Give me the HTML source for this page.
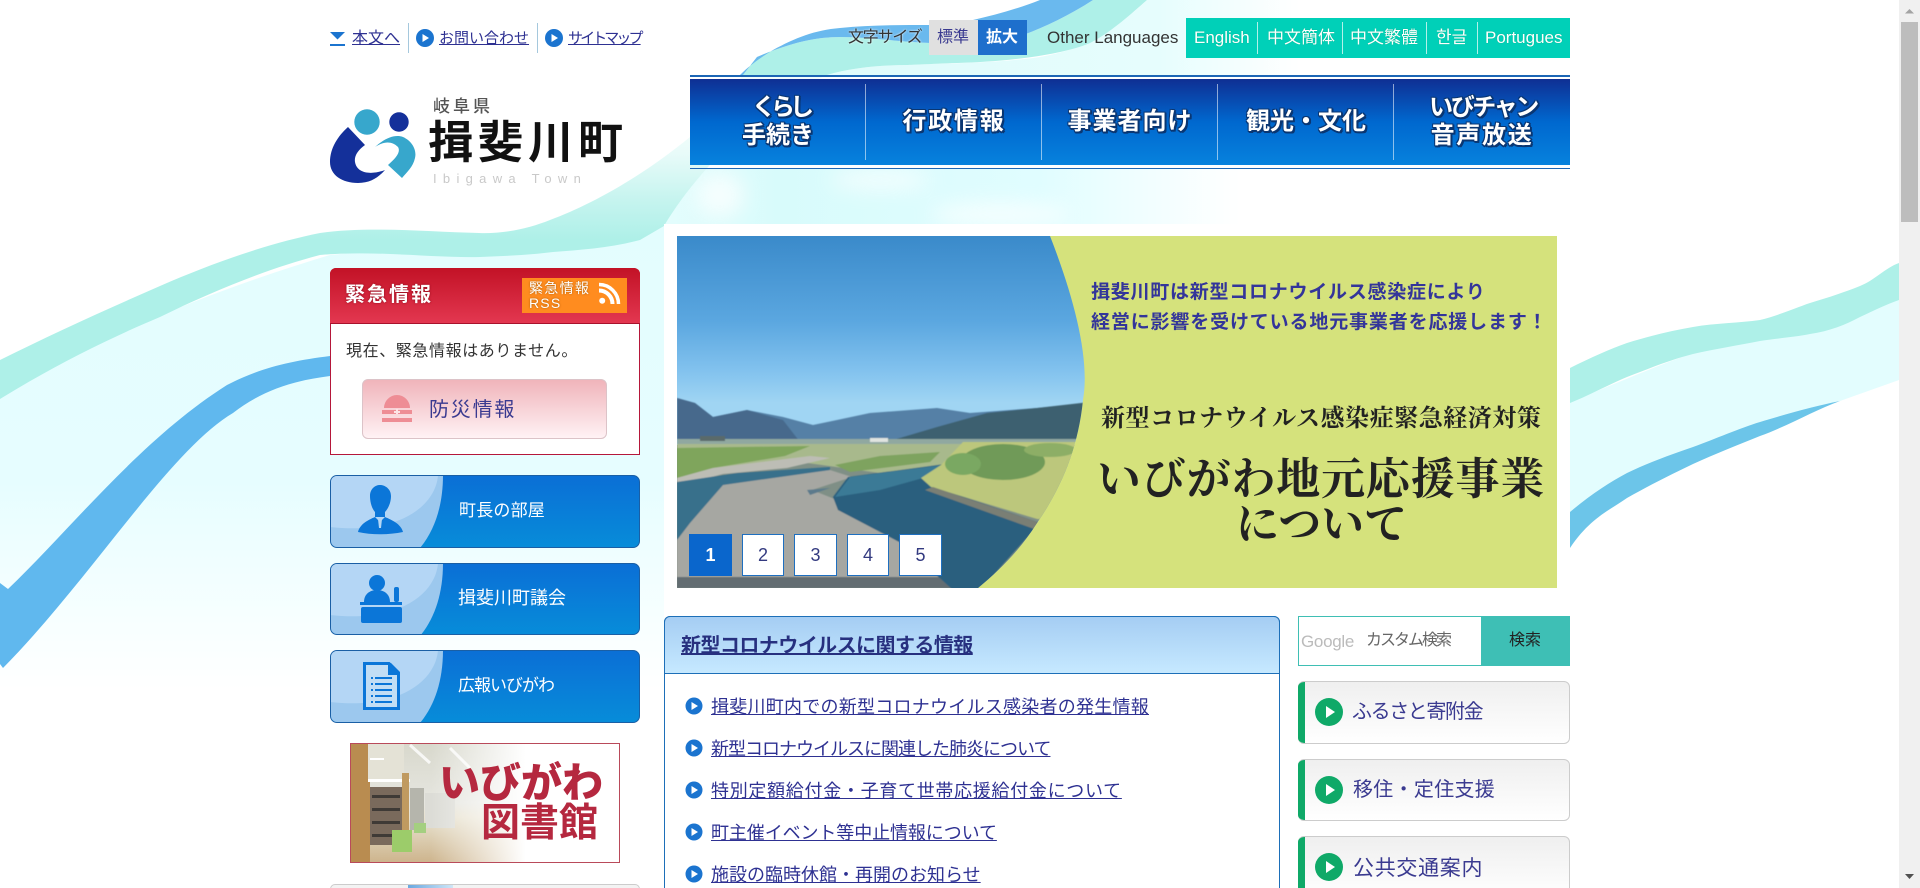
<!DOCTYPE html>
<html lang="ja"><head><meta charset="utf-8"><title>揖斐川町</title>
<style>
*{box-sizing:border-box}
html,body{margin:0;padding:0;width:1920px;height:888px;overflow:hidden;background:#fff}
body{position:relative;font-family:"Liberation Sans","Noto Sans CJK JP",sans-serif;color:#333}
.t{position:absolute;white-space:nowrap;line-height:1}
.b{position:absolute}
a{color:#2e3192;text-decoration:underline}
svg{position:absolute;overflow:visible}
.nav{position:absolute;top:79px;height:86px;width:176px;text-align:center;color:#fff;font-weight:700;font-size:24px;line-height:28px;text-shadow:1px 1px 0 #0a3672,-1px 1px 0 #0a3672,1px -1px 0 #0a3672,-1px -1px 0 #0a3672,2px 2px 0 #0a3672,0 2px 0 #0a3672,2px 0 0 #0a3672;display:flex;flex-direction:column;align-items:center;justify-content:center}
.nav span{display:block;white-space:nowrap}
.sep{position:absolute;top:84px;height:76px;width:1px;background:rgba(255,255,255,.55)}
.ls{position:absolute;top:22px;height:32px;width:1px;background:rgba(255,255,255,.7)}
.bb{position:absolute;left:330px;width:310px;background:linear-gradient(#0b6fd6,#078cd9);border:1px solid #1a5fa5;border-radius:7px;overflow:hidden}
.gb{position:absolute;left:1298px;width:272px;background:linear-gradient(#efefef,#fff);border:1px solid #ccc;border-left:0;border-radius:6px;overflow:hidden}
.gb i{position:absolute;left:0;top:0;bottom:0;width:7px;background:#0fa968}
.pg{position:absolute;top:534px;height:42px;background:#fff;border:1px solid #1e6fc0;color:#333a80;font-size:18px;line-height:40px;text-align:center;font-family:"Liberation Sans",sans-serif}
.li{position:absolute;left:711px;font-size:18px;line-height:1;white-space:nowrap}
</style></head><body>

<svg class="bg" style="left:0;top:0" width="1900" height="888" viewBox="0 0 1900 888">
<defs>
<linearGradient id="pl" x1="0" y1="0" x2="0" y2="1"><stop offset="0" stop-color="#e3fdfe"/><stop offset=".55" stop-color="#e6fdff"/><stop offset=".85" stop-color="#f7ffff"/><stop offset="1" stop-color="#fff"/></linearGradient>
<linearGradient id="tl" gradientUnits="userSpaceOnUse" x1="0" y1="240" x2="0" y2="125"><stop offset="0" stop-color="#aef0e8"/><stop offset=".35" stop-color="#c6f4ef"/><stop offset=".75" stop-color="#e8fbf9"/><stop offset="1" stop-color="#f3fdfc"/></linearGradient>
<linearGradient id="pc" x1="0" y1="0" x2="1" y2="0"><stop offset="0" stop-color="#dffcfb"/><stop offset=".7" stop-color="#e6fdfd"/><stop offset="1" stop-color="#fff"/></linearGradient>
<linearGradient id="cl" x1="0" y1="0" x2="1" y2="0"><stop offset="0" stop-color="#e4fdfd"/><stop offset=".2" stop-color="#d8fbfb"/><stop offset=".65" stop-color="#e0fdff"/><stop offset=".8" stop-color="#eefeff"/><stop offset="1" stop-color="#fff"/></linearGradient>
<filter id="bl" x="-20%" y="-50%" width="140%" height="200%"><feGaussianBlur stdDeviation="10"/></filter>
</defs>
<path d="M0 395C110 330 230 285 330 255L664 224V690H0Z" fill="url(#pl)"/>
<rect x="664" y="168" width="576" height="58" fill="url(#cl)"/>
<g filter="url(#bl)" opacity=".7"><ellipse cx="1000" cy="215" rx="70" ry="12" fill="#fff"/><ellipse cx="720" cy="195" rx="24" ry="22" fill="#fff"/><ellipse cx="880" cy="180" rx="50" ry="9" fill="#fff"/></g>
<path d="M0 360C50 335 105 310 160 286C215 262 270 243 320 233C370 226 430 232 479 233C505 234 530 228 550 220C590 205 640 178 690 137C712 118 730 92 743 75H827C770 100 700 165 664 226L640 240C610 248 580 250 553 252C530 255 505 256 480 257C430 258 375 250 320 255C270 268 215 290 160 317C110 338 55 365 0 399Z" fill="url(#tl)"/>
<path d="M0 583L8 589C70 530 140 440 227 385C260 368 290 361 330 356V376C290 381 260 392 233 413C170 450 90 580 3 668L0 664Z" fill="#60b8ee"/>
<path d="M1147 0H1300V75H827C850 68 880 65 907 65C957 63 1000 63 1040 57C1080 50 1110 35 1147 0Z" fill="url(#pc)"/>
<path d="M743 75L757 57C790 43 815 37 840 37C870 37 900 42 930 43C965 45 1000 42 1023 35C1045 27 1070 15 1093 0H1147C1130 15 1110 33 1090 43C1060 56 1000 62 957 63C930 64 907 65 907 65C880 65 850 68 827 75Z" fill="#aef0e8"/>
<path d="M740 75C750 65 760 58 773 50C795 38 815 30 840 28C870 25 900 25 930 25C950 25 960 23 973 20C995 15 1020 8 1040 0H1093C1070 15 1045 27 1023 35C1000 42 965 45 930 43C900 42 870 37 840 37C815 37 790 43 757 57L743 75Z" fill="#6ab9ee"/>
<path d="M1540 530L1570 512C1590 495 1610 482 1627 473C1650 462 1670 455 1693 447C1715 439 1740 428 1760 422C1790 413 1815 406 1840 401L1899 380V300C1875 305 1850 312 1827 328C1795 335 1760 338 1727 345C1680 352 1620 385 1540 412Z" fill="#e3fdfe"/>
<path d="M1540 378L1570 368C1590 358 1610 349 1627 343C1650 336 1670 331 1693 327C1715 323 1740 323 1760 320C1780 315 1795 308 1810 303C1830 297 1845 292 1860 286C1875 280 1885 268 1899 263V300C1885 305 1875 310 1860 317C1845 325 1830 331 1810 334C1795 337 1780 338 1760 341C1740 345 1715 349 1693 354C1670 360 1650 368 1627 377C1610 384 1590 395 1570 403L1540 414Z" fill="#aef0e8"/>
<path d="M1540 530L1570 512C1590 495 1610 482 1627 473C1650 462 1670 455 1693 447C1715 439 1740 428 1760 422C1790 413 1815 406 1840 401C1815 410 1790 425 1760 436C1740 444 1715 454 1693 464C1670 475 1650 485 1627 498C1610 510 1590 518 1570 548L1540 570Z" fill="#6cc5e9"/>
</svg>

<!-- top links -->
<svg style="left:330px;top:30px" width="16" height="16"><path d="M0 2H15L7.5 9.5Z" fill="#1b74cf"/><rect x="0" y="14" width="15" height="2" fill="#1b74cf"/></svg>
<a class="t" style="left:352px;top:31px;font-size:16px">本文へ</a>
<div class="b" style="left:408px;top:23px;width:1px;height:30px;background:#a5c8dd"></div>
<svg style="left:416px;top:29px" width="18" height="18"><circle cx="9" cy="9" r="9" fill="#1b74cf"/><path d="M6.5 5L13 9L6.5 13Z" fill="#fff"/></svg>
<a class="t" style="left:439px;top:31px;font-size:15px">お問い合わせ</a>
<div class="b" style="left:537px;top:23px;width:1px;height:30px;background:#a5c8dd"></div>
<svg style="left:545px;top:29px" width="18" height="18"><circle cx="9" cy="9" r="9" fill="#1b74cf"/><path d="M6.5 5L13 9L6.5 13Z" fill="#fff"/></svg>
<a class="t" style="left:568px;top:31px;font-size:15px;letter-spacing:-2.9px">サイトマップ</a>

<!-- font size / languages -->
<div class="t" style="left:848px;top:30px;font-size:16px;letter-spacing:-1.2px;color:#333;text-shadow:0 0 2px #fff">文字サイズ</div>
<div class="b" style="left:929px;top:20px;width:49px;height:35px;background:#e0e0e0"></div>
<div class="t" style="left:937px;top:30px;font-size:16px;color:#3a3a90">標準</div>
<div class="b" style="left:978px;top:20px;width:49px;height:35px;background:#1e6fcc"></div>
<div class="t" style="left:986px;top:30px;font-size:16px;font-weight:700;color:#fff">拡大</div>
<div class="t" style="left:1047px;top:29px;font-size:17px;color:#333">Other Languages</div>
<div class="b" style="left:1186px;top:18px;width:384px;height:40px;background:#00d0b8"></div>
<div class="ls" style="left:1257px"></div><div class="ls" style="left:1342px"></div><div class="ls" style="left:1426px"></div><div class="ls" style="left:1477px"></div>
<div class="t" style="left:1194px;top:29px;font-size:17px;color:#fff;text-shadow:0 0 1px #0a7">English</div>
<div class="t" style="left:1267px;top:29px;font-size:17px;color:#fff;text-shadow:0 0 1px #0a7">中文簡体</div>
<div class="t" style="left:1350px;top:29px;font-size:17px;color:#fff;text-shadow:0 0 1px #0a7">中文繁體</div>
<div class="t" style="left:1436px;top:29px;font-size:17px;color:#fff;text-shadow:0 0 1px #0a7">한글</div>
<div class="t" style="left:1485px;top:29px;font-size:17px;color:#fff;text-shadow:0 0 1px #0a7">Portugues</div>

<!-- logo -->
<svg style="left:0;top:0" width="640" height="200">
<circle cx="367" cy="122" r="12.7" fill="#37a7cc"/><circle cx="399" cy="122" r="9.7" fill="#14309a"/>
<path d="M348 127L365 145C358 150 354 156 355 162C357 174 372 175 385 170C378 178 370 183 358 183C342 183 330 175 330 162C330 148 338 136 348 127Z" fill="#14309a"/>
<path d="M375 147C385 138 395 134 403 137C412 141 417 150 415 158C413 167 407 172 402 178L388 165C396 158 401 152 398 147C392 141 384 141 375 147Z" fill="#37a7cc"/>
</svg>
<div class="t" style="left:433px;top:98px;font-size:17px;letter-spacing:3px;color:#555;font-weight:500">岐阜県</div>
<div class="t" style="left:428px;top:120px;font-size:45px;letter-spacing:5px;color:#111;font-weight:700">揖斐川町</div>
<div class="t" style="left:433px;top:172px;font-size:13px;letter-spacing:6.3px;color:#c9c9c9">Ibigawa Town</div>

<!-- nav -->
<div class="b" style="left:690px;top:75px;width:880px;height:2px;background:#1c66b5"></div>
<div class="b" style="left:690px;top:79px;width:880px;height:86px;background:linear-gradient(#0f2f93,#0068cf 50%,#0782dd)"></div>
<div class="b" style="left:690px;top:168px;width:880px;height:1px;background:#1c66b5"></div>
<div class="sep" style="left:865px"></div><div class="sep" style="left:1041px"></div><div class="sep" style="left:1217px"></div><div class="sep" style="left:1393px"></div>
<div class="nav" style="left:690px"><span style="letter-spacing:-5px;margin-right:-5px">くらし</span><span>手続き</span></div>
<div class="nav" style="left:866px;letter-spacing:1.8px">行政情報</div>
<div class="nav" style="left:1042px;letter-spacing:1px">事業者向け</div>
<div class="nav" style="left:1218px">観光・文化</div>
<div class="nav" style="left:1394px"><span style="letter-spacing:-2.4px;margin-right:-2px">いびチャン</span><span style="letter-spacing:1.7px">音声放送</span></div>

<!-- emergency -->
<div class="b" style="left:330px;top:268px;width:310px;height:187px;background:#fff;border:1px solid #b5173a;border-radius:6px 6px 0 0"></div>
<div class="b" style="left:330px;top:268px;width:310px;height:56px;background:linear-gradient(#c21226,#e33750);border-radius:6px 6px 0 0;border-bottom:1px solid #a8122c"></div>
<div class="t" style="left:345px;top:285px;font-size:20px;letter-spacing:2px;font-weight:700;color:#fff;text-shadow:0 0 2px #8a0c1c">緊急情報</div>
<div class="b" style="left:522px;top:278px;width:105px;height:35px;background:#ff8c1f"></div>
<div class="t" style="left:529px;top:281px;font-size:14px;letter-spacing:1.3px;color:#fff;text-shadow:0 0 2px #a65a00">緊急情報</div>
<div class="t" style="left:529px;top:296px;font-size:14px;letter-spacing:1.2px;color:#fff;text-shadow:0 0 2px #a65a00">RSS</div>
<svg style="left:599px;top:283px" width="21" height="21"><circle cx="3.2" cy="17.8" r="3" fill="#fff"/><path d="M0 7.5A13.5 13.5 0 0 1 13.5 21" fill="none" stroke="#fff" stroke-width="4"/><path d="M0 1.5A19.5 19.5 0 0 1 19.5 21" fill="none" stroke="#fff" stroke-width="3.5"/></svg>
<div class="t" style="left:346px;top:344px;font-size:16px;letter-spacing:.6px;color:#333">現在、緊急情報はありません。</div>
<div class="b" style="left:362px;top:379px;width:245px;height:60px;background:linear-gradient(#f0b4ba,#fff2f4);border:1px solid #dcc3c8;border-radius:6px"></div>
<svg style="left:382px;top:395px" width="30" height="28"><path d="M2 13C2 6 8 0 15 0S28 6 28 13Z" fill="#ee8d95"/><rect x="0" y="15" width="30" height="4" fill="#ee8d95"/><rect x="0" y="23" width="30" height="4" fill="#ee8d95"/><path d="M14 14h2v2h2v2h-2v1h-2v-1h-2v-2h2z" fill="#fde4e6"/></svg>
<div class="t" style="left:429px;top:400px;font-size:20px;letter-spacing:1.8px;color:#3a3a90">防災情報</div>

<!-- blue buttons -->
<svg width="0" height="0" style="left:0;top:0"><defs><symbol id="bs" viewBox="0 0 310 73"><path d="M0 0H113C113 30 105 55 90 73H0Z" fill="#9cc8ee"/><path d="M0 0H108C106 30 70 60 0 52Z" fill="#b4d6f5"/></symbol></defs></svg>
<div class="bb" style="top:475px;height:73px"><svg style="left:-1px;top:-1px" width="310" height="73"><use href="#bs"/></svg></div>
<svg style="left:358px;top:484px" width="46" height="50"><path d="M12 12C12 5 17 1 22 1S33 5 33 12C33 20 29 26 27 28V33H17V28C15 26 12 20 12 12Z" fill="#0b76d8"/><path d="M0 48C2 40 10 36 17 33L22 38L27 33C34 36 43 40 45 48C30 51 14 51 0 48Z" fill="#0b76d8"/><path d="M20 35h4l-1 9h-2z" fill="#b4d6f5"/></svg>
<div class="t" style="left:459px;top:502px;font-size:17px;letter-spacing:.2px;color:#fff">町長の部屋</div>

<div class="bb" style="top:563px;height:72px"><svg style="left:-1px;top:-1px" width="310" height="73"><use href="#bs"/></svg></div>
<svg style="left:360px;top:575px" width="43" height="49"><circle cx="17" cy="8" r="8" fill="#0b76d8"/><path d="M4 27C4 19 10 15 17 15S30 19 30 27Z" fill="#0b76d8"/><rect x="34" y="12" width="5" height="15" rx="2" fill="#0b76d8"/><rect x="0" y="27" width="42" height="3" fill="#0b76d8"/><rect x="1" y="32" width="41" height="16" rx="2" fill="#0b76d8"/></svg>
<div class="t" style="left:458px;top:589px;font-size:18px;color:#fff">揖斐川町議会</div>

<div class="bb" style="top:650px;height:73px"><svg style="left:-1px;top:-1px" width="310" height="73"><use href="#bs"/></svg></div>
<svg style="left:363px;top:662px" width="37" height="49"><path d="M1.5 1.5H26L35.5 11V46.5H1.5Z" fill="#c2def5" stroke="#0b76d8" stroke-width="3"/><path d="M25 1H28L37 10V13H25Z" fill="#0b76d8"/><g fill="#0b76d8"><rect x="12" y="15" width="17" height="2"/><rect x="12" y="21" width="17" height="2"/><rect x="12" y="27" width="17" height="2"/><rect x="12" y="33" width="17" height="2"/><rect x="12" y="39" width="17" height="2"/><rect x="8" y="15" width="2" height="2"/><rect x="8" y="21" width="2" height="2"/><rect x="8" y="27" width="2" height="2"/><rect x="8" y="33" width="2" height="2"/><rect x="8" y="39" width="2" height="2"/></g></svg>
<div class="t" style="left:458px;top:677px;font-size:17px;letter-spacing:-1px;color:#fff">広報いびがわ</div>

<!-- library banner -->
<svg style="left:350px;top:743px" width="270" height="120" viewBox="0 0 270 120">
<defs><linearGradient id="fd" x1="0" y1="0" x2="1" y2="0"><stop offset=".3" stop-color="#fff" stop-opacity="0"/><stop offset=".65" stop-color="#fff"/></linearGradient>
<linearGradient id="fl" x1="0" y1="0" x2="0" y2="1"><stop offset="0" stop-color="#d8d8cc"/><stop offset=".5" stop-color="#e6e6e0"/><stop offset=".62" stop-color="#e8e2d0"/><stop offset="1" stop-color="#cdb48c"/></linearGradient></defs>
<rect width="270" height="120" fill="url(#fl)"/>
<rect x="0" width="20" height="120" fill="#b98c50"/><rect x="18" y="0" width="36" height="36" fill="#e4e2d6"/><rect x="20" y="15" width="14" height="2" fill="#fff"/><rect x="18" y="36" width="42" height="3" fill="#fff"/>
<rect x="20" y="44" width="32" height="58" fill="#7a6a5c"/>
<rect x="22" y="52" width="28" height="3" fill="#3f3a36"/><rect x="22" y="65" width="28" height="3" fill="#3f3a36"/><rect x="22" y="78" width="28" height="3" fill="#3f3a36"/><rect x="22" y="91" width="28" height="3" fill="#3f3a36"/>
<rect x="52" y="30" width="7" height="70" fill="#c09a60"/><rect x="60" y="45" width="14" height="42" fill="#b5b5ac"/><rect x="75" y="50" width="30" height="35" fill="#dcdcd6"/>
<path d="M42 87h20v22H42z" fill="#9ccc6a"/><path d="M64 80h12v10H64z" fill="#a4cf80"/>
<path d="M60 2L80 20M100 5L120 25" stroke="#fff" stroke-width="3" opacity=".8"/>
<rect width="270" height="120" fill="url(#fd)"/>
<rect x=".5" y=".5" width="269" height="119" fill="none" stroke="#b94a5a"/>
</svg>
<div class="t" style="left:439px;top:763px;font-size:41px;font-weight:900;color:#b5283f">いびがわ</div>
<div class="t" style="left:481px;top:804px;font-size:39px;font-weight:700;color:#b5283f">図書館</div>

<div class="b" style="left:330px;top:884px;width:310px;height:10px;background:#f3f3f3;border:1px solid #ccc;border-radius:6px"></div>
<div class="b" style="left:408px;top:885px;width:45px;height:4px;background:linear-gradient(90deg,#6aa8e0,#cfe6f7)"></div>

<!-- hero -->
<div class="b" style="left:664px;top:224px;width:906px;height:664px;background:#fff"></div>
<svg style="left:677px;top:236px" width="880" height="352" viewBox="677 236 880 352">
<defs>
<linearGradient id="sky" gradientUnits="userSpaceOnUse" x1="0" y1="236" x2="0" y2="450"><stop offset="0" stop-color="#3a8aca"/><stop offset=".4" stop-color="#5ba7e0"/><stop offset=".63" stop-color="#82c2ee"/><stop offset=".78" stop-color="#a0d5f3"/></linearGradient>
<filter id="sft"><feGaussianBlur stdDeviation=".5"/></filter>
<clipPath id="ph"><path d="M677 236H1050C1075 300 1090 360 1083 400C1078 450 1060 490 1037 523C1020 550 1000 570 978 588H677Z"/></clipPath>
</defs>
<rect x="677" y="236" width="880" height="352" fill="#d5e27c"/>
<g clip-path="url(#ph)">
<rect x="677" y="236" width="420" height="352" fill="url(#sky)"/>
<rect x="677" y="445" width="420" height="143" fill="#7f8f86"/>
<g filter="url(#sft)">
<path d="M677 398L695 403L713 417L747 410L783 417L813 425L837 420L870 413L937 408L970 413L1037 408L1090 403V445H677Z" fill="#5480a6"/>
<path d="M677 398L695 403L713 417L747 410L783 420L800 442H677Z" fill="#47698c"/>
<path d="M893 440L937 427L987 413L1037 408L1090 402V442Z" fill="#3d6070"/>
<rect x="677" y="439" width="410" height="5" fill="#90a8a0"/>
<rect x="700" y="436" width="25" height="5" fill="#5a6a6a"/><rect x="870" y="438" width="18" height="4" fill="#e0e4e0"/>
<path d="M677 444H1090V470L1037 517L930 480L800 462L677 480Z" fill="#a8b98c"/>
<path d="M677 448L810 446L785 456L713 468L677 478Z" fill="#7fa55c"/>
<path d="M677 478L713 468L810 456L830 458L787 468L723 474L677 486Z" fill="#bdbdb5"/>
<path d="M677 482L737 473L830 467L830 472L723 487L690 525L677 542Z" fill="#37708b"/>
<path d="M677 540L690 523L723 485L830 470L852 477L812 490L837 500L840 510L883 530L903 543L953 580V588H677Z" fill="#a6a7a2"/>
<path d="M677 577H953V588H677Z" fill="#646d72"/>
<path d="M807 490L830 488L810 495Z" fill="#5b7a8c"/>
<path d="M848 477L945 464L925 478L935 487L1040 523L980 590H953L901 543L838 510L833 497Z" fill="#2a5f7e"/>
<path d="M850 477L943 465L923 478L880 490L835 497Z" fill="#3a7a96"/>
<path d="M941 465L963 442H1090V525L1037 519L931 487L921 478Z" fill="#bcc77c"/>
<ellipse cx="1003" cy="462" rx="42" ry="18" fill="#6f9a58"/><ellipse cx="963" cy="464" rx="18" ry="11" fill="#7aa862"/><ellipse cx="1050" cy="450" rx="26" ry="7" fill="#8dae66"/>
<path d="M835 465L880 456L940 452L930 462L850 472Z" fill="#7ea35e"/>
<path d="M933 487L1037 522V530L925 490Z" fill="#7a7f74"/>
</g>
</g>
</svg>
<div class="t" style="left:1091px;top:283px;font-size:19px;font-weight:700;letter-spacing:.75px;color:#33359a">揖斐川町は新型コロナウイルス感染症により</div>
<div class="t" style="left:1091px;top:313px;font-size:19px;font-weight:700;letter-spacing:.85px;color:#33359a">経営に影響を受けている地元事業者を応援します！</div>
<div class="t" style="left:1101px;top:407px;font-size:24px;font-weight:700;letter-spacing:.55px;color:#222;font-family:'Liberation Serif','Noto Serif CJK SC',serif">新型コロナウイルス感染症緊急経済対策</div>
<div class="t" style="left:1097px;top:458px;font-size:44px;font-weight:700;letter-spacing:.8px;color:#222;font-family:'Liberation Serif','Noto Serif CJK SC',serif">いびがわ地元応援事業</div>
<div class="t" style="left:1236px;top:504px;font-size:43px;font-weight:700;color:#222;font-family:'Liberation Serif','Noto Serif CJK SC',serif">について</div>
<div class="pg" style="left:689px;width:43px;background:#0a66cc;border-color:#0a66cc;color:#fff;font-weight:700">1</div>
<div class="pg" style="left:742px;width:42px">2</div>
<div class="pg" style="left:794px;width:43px">3</div>
<div class="pg" style="left:847px;width:42px">4</div>
<div class="pg" style="left:899px;width:43px">5</div>

<!-- corona panel -->
<div class="b" style="left:664px;top:616px;width:616px;height:290px;border:1px solid #1d6fb8;border-radius:6px 6px 0 0;background:#fff"></div>
<div class="b" style="left:664px;top:616px;width:616px;height:58px;background:linear-gradient(#a5cdf3,#c6e9ff);border:1px solid #1d6fb8;border-radius:6px 6px 0 0"></div>
<a class="t" style="left:681px;top:636px;font-size:20px;font-weight:700;letter-spacing:-.55px;color:#27307f">新型コロナウイルスに関する情報</a>
<svg style="left:686px;top:698px" width="16" height="180"><g id="d"><circle cx="8" cy="8" r="8.5" fill="#1b74cf"/><path d="M5.5 4L12 8L5.5 12Z" fill="#fff"/></g><use href="#d" y="42"/><use href="#d" y="84"/><use href="#d" y="126"/><use href="#d" y="168"/></svg>
<a class="li" style="top:698px;letter-spacing:.25px">揖斐川町内での新型コロナウイルス感染者の発生情報</a>
<a class="li" style="top:740px;letter-spacing:-1px">新型コロナウイルスに関連した肺炎について</a>
<a class="li" style="top:782px;letter-spacing:.7px">特別定額給付金・子育て世帯応援給付金について</a>
<a class="li" style="top:824px;letter-spacing:-.1px">町主催イベント等中止情報について</a>
<a class="li" style="top:866px;letter-spacing:0">施設の臨時休館・再開のお知らせ</a>

<!-- search -->
<div class="b" style="left:1298px;top:616px;width:184px;height:50px;background:#fff;border:1px solid #3fbfb4"></div>
<div class="b" style="left:1481px;top:616px;width:89px;height:50px;background:#3ebfb5"></div>
<div class="t" style="left:1301px;top:633px;font-size:17px;letter-spacing:-.3px;color:#bbb">Google</div>
<div class="t" style="left:1366px;top:633px;font-size:16px;letter-spacing:-2px;color:#666">カスタム検索</div>
<div class="t" style="left:1509px;top:633px;font-size:16px;color:#222">検索</div>

<!-- green buttons -->
<div class="gb" style="top:681px;height:63px"><i></i></div>
<div class="gb" style="top:759px;height:62px"><i></i></div>
<div class="gb" style="top:836px;height:63px"><i></i></div>
<svg style="left:1315px;top:698px" width="28" height="190"><g id="g"><circle cx="14" cy="14" r="14" fill="#0fa968"/><path d="M11 8L20 14L11 20Z" fill="#fff"/></g><use href="#g" y="78"/><use href="#g" y="155"/></svg>
<div class="t" style="left:1352px;top:702px;font-size:20px;letter-spacing:-1.4px;color:#3a3a90">ふるさと寄附金</div>
<div class="t" style="left:1353px;top:780px;font-size:20px;letter-spacing:.3px;color:#3a3a90">移住・定住支援</div>
<div class="t" style="left:1353px;top:858px;font-size:21px;letter-spacing:.7px;color:#3a3a90">公共交通案内</div>

<!-- scrollbar -->
<div class="b" style="left:1899px;top:0;width:21px;height:888px;background:#f0f0f0"></div>
<div class="b" style="left:1901px;top:22px;width:17px;height:200px;background:#bdbdbd"></div>
<svg style="left:1899px;top:0" width="21" height="888"><path d="M6 13.5L10.5 9L15 13.5Z" fill="#a3a3a3"/><path d="M6 874L10.5 879L15 874Z" fill="#505050"/></svg>
</body></html>
